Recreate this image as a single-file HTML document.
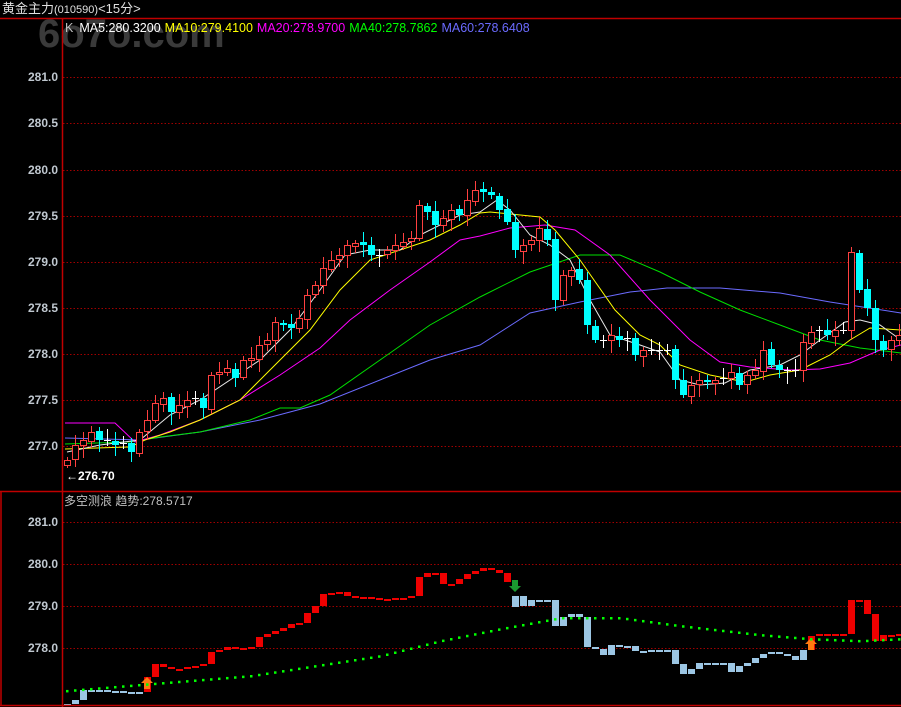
<!DOCTYPE html>
<html><head><meta charset="utf-8"><style>
html,body{margin:0;padding:0;background:#000;width:901px;height:707px;overflow:hidden}
svg{display:block}
text{font-family:"Liberation Sans","Noto Sans CJK SC",sans-serif}
</style></head><body>
<svg id="s" width="901" height="707" viewBox="0 0 901 707" xmlns="http://www.w3.org/2000/svg">
<rect width="901" height="707" fill="#000"/>
<text x="38" y="47" font-size="40" font-weight="bold" fill="#3a3a3a">6o7o.com</text>
<text x="2" y="13" font-size="13" fill="#e0e0e0">黄金主力<tspan font-size="11">(010590)</tspan>&lt;15分&gt;</text>
<text x="65" y="32" font-size="12.5"><tspan fill="#c0c0c0">K</tspan><tspan fill="#fff" dx="6">MA5:280.3200</tspan><tspan fill="#ffff00" dx="4">MA10:279.4100</tspan><tspan fill="#ff00ff" dx="4">MA20:278.9700</tspan><tspan fill="#00ff00" dx="4">MA40:278.7862</tspan><tspan fill="#6b6bff" dx="4">MA60:278.6408</tspan></text>
<g id="grid" stroke="#a00000" stroke-dasharray="1.5,2" stroke-width="1"></g>
<g id="axis" font-size="12" font-weight="bold" fill="#c0c8d0" text-anchor="end"></g>
<g id="bars"></g><g id="dots" fill="#00ff00"></g>
<g id="mas" fill="none" stroke-width="1"></g>
<g id="candles"></g>
<text x="66" y="480" font-size="12" font-weight="bold" fill="#fff">←276.70</text>
<text x="64" y="505" font-size="12" fill="#c0c0c0">多空测浪 趋势:278.5717</text>
<g stroke="#c00000" stroke-width="1.5" fill="none">
<line x1="0" y1="18.5" x2="901" y2="18.5"/>
<line x1="62.5" y1="18" x2="62.5" y2="707"/>
<line x1="0" y1="491.5" x2="901" y2="491.5"/>
<line x1="0" y1="705.5" x2="901" y2="705.5"/>
<line x1="1" y1="491" x2="1" y2="706"/>
</g>
</svg>
<script>
(function(){
var NS="http://www.w3.org/2000/svg";
function el(p,t,a){var e=document.createElementNS(NS,t);for(var k in a)e.setAttribute(k,a[k]);document.getElementById(p).appendChild(e);return e;}
[[77,"281.0"],[123,"280.5"],[170,"280.0"],[216,"279.5"],[262,"279.0"],[308,"278.5"],[354,"278.0"],[400,"277.5"],[446,"277.0"],[522,"281.0"],[564,"280.0"],[606,"279.0"],[648,"278.0"]].forEach(function(g){
 el("grid","line",{x1:63,x2:901,y1:g[0]+.5,y2:g[0]+.5});
 var t=el("axis","text",{x:58,y:g[0]+4});t.textContent=g[1];
});
var M={
"#6b6bff":[[65,438],[140,440],[200,432],[260,420],[320,404],[380,380],[430,360],[480,345],[530,313],[580,302],[630,292],[667,288],[720,288],[780,293],[830,302],[901,313]],
"#00e000":[[65,444],[130,442],[160,437],[200,432],[250,420],[280,408],[300,408],[330,395],[380,360],[430,325],[480,297],[530,272],[580,255],[620,255],[660,272],[700,292],[740,310],[780,325],[820,340],[860,348],[901,353]],
"#ff00ff":[[65,423],[115,423],[135,442],[160,435],[200,420],[240,400],[280,375],[320,348],[350,320],[390,290],[430,262],[460,240],[480,236],[510,228],[545,225],[575,230],[610,255],[650,300],[690,340],[720,362],[750,367],[790,370],[820,369],[850,363],[880,350],[901,345]],
"#ffff00":[[65,449],[130,447],[145,440],[170,432],[200,420],[240,400],[280,360],[310,330],[340,290],[370,260],[400,250],[430,240],[460,225],[480,213],[490,212],[540,217],[555,230],[580,260],[615,310],[640,335],[660,345],[680,365],[710,375],[745,382],[770,375],[800,370],[830,355],[850,340],[870,328],[901,330]],
"#e8e8e8":[[67,452],[100,445],[140,440],[170,415],[200,400],[230,380],[260,360],[290,330],[320,290],[345,255],[370,250],[400,250],[420,235],[440,225],[460,215],[480,212],[497,200],[510,210],[530,235],[550,245],[570,260],[590,300],[610,335],[640,345],[660,352],[680,380],[700,385],[725,383],[750,370],[780,365],[800,355],[820,340],[845,322],[860,320],[880,325],[901,340]]};
for(var col in M)el("mas","polyline",{stroke:col,points:M[col].map(function(p){return p.join(",")}).join(" ")});
var C=[460,445,440,432,440,440,445,443,452,432,420,403,398,412,405,400,398,408,375,372,368,378,360,358,345,340,322,325,328,318,295,285,268,260,255,245,243,245,255,255,250,245,242,238,205,212,225,218,210,215,200,190,192,195,210,222,250,245,240,228,240,300,275,270,280,325,340,340,335,340,338,355,350,350,350,350,380,395,385,380,382,380,378,372,385,375,370,350,365,370,370,370,342,332,330,335,330,330,252,290,308,340,350,340,335];
var prev=465;
for(var i=0;i<C.length;i++){
 var x=67+8*i,o=prev,c=C[i];
 var tp=Math.min(o,c),bt=Math.max(o,c);
 var hh=tp-(3+((i*7)%9)),ll=bt+(3+((i*5)%11));
 if(Math.abs(o-c)<2){el("candles","line",{x1:x+.5,x2:x+.5,y1:hh,y2:ll,stroke:"#fff"});el("candles","line",{x1:x-3,x2:x+4,y1:c+.5,y2:c+.5,stroke:"#fff"});}
 else if(c<o){el("candles","line",{x1:x+.5,x2:x+.5,y1:hh,y2:ll,stroke:"#ff4040"});el("candles","rect",{x:x-2.5,y:tp+.5,width:6,height:bt-tp,fill:"#000",stroke:"#ff4040"});}
 else{el("candles","line",{x1:x+.5,x2:x+.5,y1:hh,y2:ll,stroke:"#00ffff"});el("candles","rect",{x:x-3,y:tp,width:7,height:bt-tp,fill:"#00ffff"});}
 prev=c+((i%3)-1);
}
var B=[704,700,690,690,690,691,691,692,692,692,677,664,667,669,669,667,666,664,652,650,647,649,648,647,637,634,631,628,624,623,613,606,594,593,592,596,597,597,598,600,599,598,598,596,577,573,573,584,584,579,574,571,568,570,573,582,596,606,600,600,600,626,617,614,617,647,649,655,645,647,646,651,651,650,650,650,664,674,669,663,663,663,663,672,666,663,658,654,652,654,656,660,650,636,634,634,635,634,600,600,614,641,635,635,634];
var pv=705;
for(var i=0;i<B.length;i++){
 var x=64+8*i,red=(i>=10&&i<=55)||i>=93;
 var t=Math.min(pv,B[i]),b=Math.max(pv,B[i]);if(b-t<2)b=t+2;
 if(i==56){t=596;b=607;}
 el("bars","rect",{x:x,y:t,width:7,height:b-t,fill:red?"#ee0000":"#9cc6e4"});
 pv=B[i];
}
var D=[[65,690],[150,683],[250,675],[380,655],[440,640],[500,628],[560,617],[620,617],[680,625],[760,634],[810,638],[860,640],[901,638]];
for(var x=66;x<901;x+=8){for(var k=0;k<D.length-1;k++)if(x>=D[k][0]&&x<=D[k+1][0]){var y=D[k][1]+(D[k+1][1]-D[k][1])*(x-D[k][0])/(D[k+1][0]-D[k][0]);el("dots","rect",{x:x,y:y,width:2.5,height:2.5});break;}}
function arrow(x,y,col,up){var p=up?[[x,y],[x+6,y+6],[x+3,y+6],[x+3,y+12],[x-3,y+12],[x-3,y+6],[x-6,y+6]]:[[x,y+12],[x+6,y+6],[x+3,y+6],[x+3,y],[x-3,y],[x-3,y+6],[x-6,y+6]];el("bars","polygon",{points:p.map(function(q){return q.join(",")}).join(" "),fill:col});}
arrow(147,677,"#ff7a10",true);arrow(811,638,"#ff7a10",true);arrow(515,580,"#1a9a30",false);
})();
</script>
</body></html>
